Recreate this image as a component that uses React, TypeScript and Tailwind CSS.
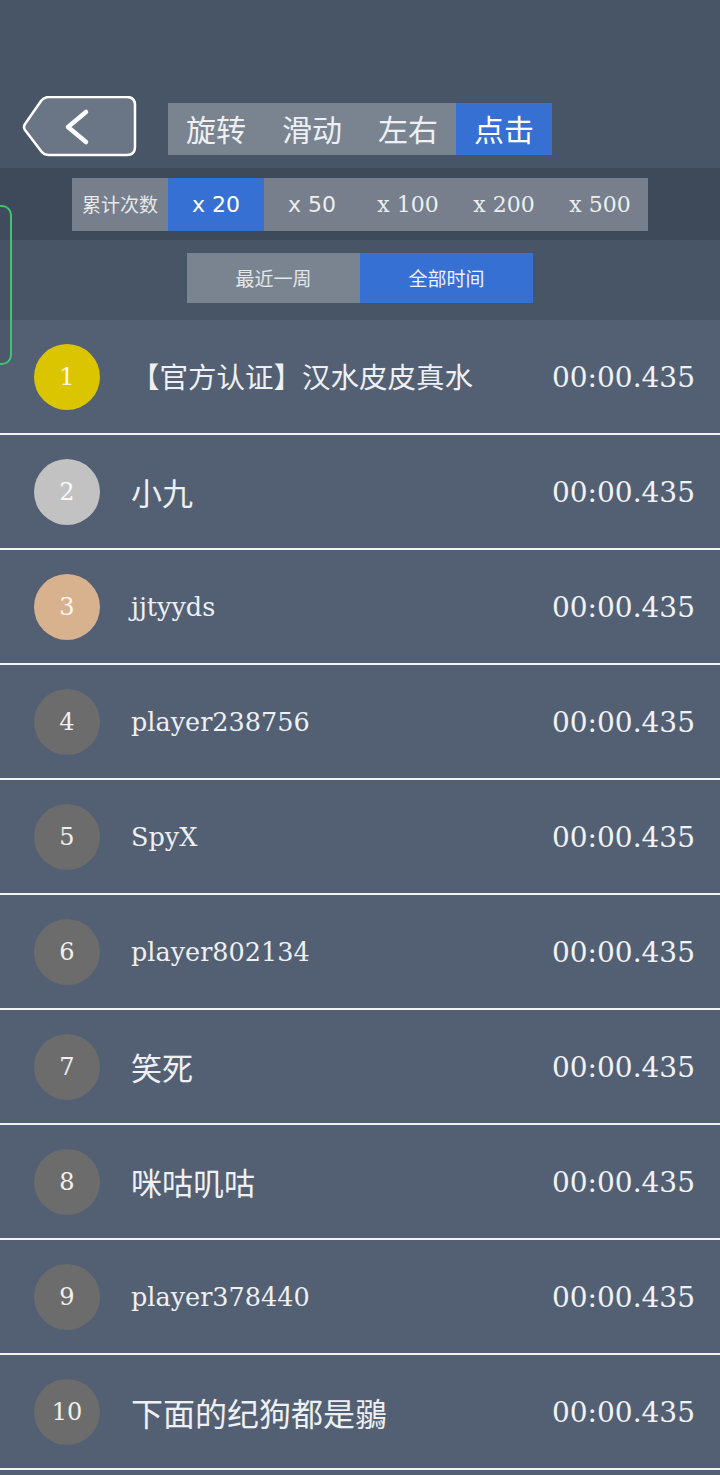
import React from 'react';

const modes = ['旋转', '滑动', '左右', '点击'];
const counts = [
  { label: 'x 20', serif: false },
  { label: 'x 50', serif: false },
  { label: 'x 100', serif: true },
  { label: 'x 200', serif: true },
  { label: 'x 500', serif: true },
];

const rows = [
  { name: '【官方认证】汉水皮皮真水', size: 'text-[28.5px]', cjk: true },
  { name: '小九', size: 'text-[31px]', cjk: true },
  { name: 'jjtyyds', size: 'text-[25.5px]', cjk: false },
  { name: 'player238756', size: 'text-[25.5px]', cjk: false },
  { name: 'SpyX', size: 'text-[25.5px]', cjk: false },
  { name: 'player802134', size: 'text-[25.5px]', cjk: false },
  { name: '笑死', size: 'text-[31px]', cjk: true },
  { name: '咪咕叽咕', size: 'text-[31px]', cjk: true },
  { name: 'player378440', size: 'text-[25.5px]', cjk: false },
  { name: '下面的纪狗都是鶸', size: 'text-[32px]', cjk: true },
];

const rankColor = (i: number) => {
  if (i === 0) return 'bg-[#dac500]';
  if (i === 1) return 'bg-[#c2c2c2]';
  if (i === 2) return 'bg-[#d8b18f]';
  return 'bg-[#6c6c6c]';
};

function BackButton() {
  return (
    <svg width="118" height="64" viewBox="0 0 118 64" className="shrink-0">
      <path
        d="M4 28 L20 5 Q23 1 28 1 L106 1 Q114 1 114 9 L114 51 Q114 59 106 59 L28 59 Q23 59 20 55 L4 34 Q2 31 4 28 Z"
        fill="#6a7586"
        stroke="#ffffff"
        strokeWidth="2.5"
        strokeLinejoin="round"
      />
      <path d="M65 16 L47 31 L65 46" fill="none" stroke="#ffffff" strokeWidth="4.5" strokeLinecap="round" strokeLinejoin="round" />
    </svg>
  );
}

export default function App() {
  return (
    <div className="relative w-[720px] h-[1475px] overflow-hidden bg-[#475566] text-[#eef0f3] font-['Noto_Sans_CJK_SC',sans-serif]">
      {/* header */}
      <div className="h-[168px] flex items-start pt-[96px] pl-[21px]">
        <BackButton />
        <div className="ml-[29px] mt-[7px] flex h-[52px] bg-[#7a8490]">
          {modes.map((m, i) => (
            <div
              key={m}
              className={`w-[96px] flex items-center justify-center text-[30px] leading-none pb-[3px] ${i === 3 ? 'bg-[#3670d3] text-white' : ''}`}
            >
              {m}
            </div>
          ))}
        </div>
      </div>

      {/* count filter */}
      <div className="h-[72px] bg-[#3e4959] flex justify-center pt-[10px]">
        <div className="flex h-[53px] bg-[#767f8b]">
          <div className="w-[96px] flex items-center justify-center text-[19px] leading-none text-[#e6e8ec] pb-[3px]">累计次数</div>
          {counts.map((c, i) => (
            <div
              key={c.label}
              className={`w-[96px] flex items-center justify-center text-[22px] leading-none ${
                c.serif ? "font-['DejaVu_Serif',serif]" : "font-['DejaVu_Sans',sans-serif]"
              } ${i === 0 ? 'bg-[#3670d3] text-white' : 'text-[#eceef1]'}`}
            >
              {c.label}
            </div>
          ))}
        </div>
      </div>

      {/* time filter */}
      <div className="h-[80px] flex justify-center pt-[13px]">
        <div className="flex h-[50px]">
          <div className="w-[173px] bg-[#7a8490] flex items-center justify-center text-[19px] leading-none text-[#e3e6ea] pb-[2px]">最近一周</div>
          <div className="w-[173px] bg-[#3670d3] flex items-center justify-center text-[19px] leading-none text-[#eef2fa] pb-[2px]">全部时间</div>
        </div>
      </div>

      {/* ranking list */}
      <div className="flex flex-col">
        {rows.map((r, i) => (
          <div key={i} className="h-[115px] shrink-0 bg-[#536073] border-b-2 border-[#f2f3f5] flex items-center pl-[34px] pr-[25px]">
            <div className={`w-[66px] h-[66px] rounded-full ${rankColor(i)} flex items-center justify-center font-['DejaVu_Serif',serif] text-[24px] leading-none text-white/90`}>
              {i + 1}
            </div>
            <div
              className={`ml-[31px] flex-1 leading-none ${r.size} ${
                r.cjk ? "font-['Noto_Sans_CJK_SC',sans-serif]" : "font-['DejaVu_Serif',serif] pt-[2px]"
              }`}
            >
              {r.name}
            </div>
            <div className="font-['DejaVu_Serif',serif] text-[28px] leading-none text-[#f0f2f5] pt-[3px]">00:00.435</div>
          </div>
        ))}
        <div className="h-[40px] bg-[#536073]" />
      </div>

      {/* side tab peeking from left edge */}
      <div className="absolute left-[-12px] top-[205px] w-[24px] h-[160px] rounded-r-[10px] border-2 border-[#3fc56c] bg-[#435064]/40" />
    </div>
  );
}
